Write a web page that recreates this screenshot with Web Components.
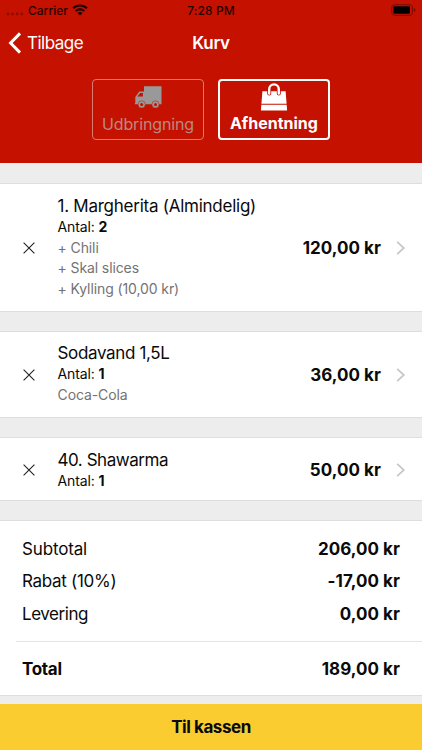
<!DOCTYPE html>
<html lang="da">
<head>
<meta charset="utf-8">
<title>Kurv</title>
<style>
  body {
    margin: 0;
    font-family: Inter, "Liberation Sans", sans-serif;
    color: #0a0a0a;
  }
</style>
</head>
<body>
<cart-screen>
  <status-bar slot="top" carrier="Carrier" time="7:28 PM"></status-bar>
  <nav-bar slot="top" back="Tilbage">Kurv</nav-bar>
  <delivery-switch slot="top">
    <delivery-option icon="truck" style="--track:-0.15px">Udbringning</delivery-option>
    <delivery-option icon="bag" selected style="--track:0">Afhentning</delivery-option>
  </delivery-switch>
  <cart-item name="1. Margherita (Almindelig)" count="2" price="120,00 kr">
    <div>+ Chili</div>
    <div>+ Skal slices</div>
    <div>+ Kylling (10,00 kr)</div>
  </cart-item>
  <cart-item name="Sodavand 1,5L" count="1" price="36,00 kr" style="--track:-0.35px">
    <div>Coca-Cola</div>
  </cart-item>
  <cart-item name="40. Shawarma" count="1" price="50,00 kr" style="--track:-0.45px"></cart-item>
  <cart-totals>
    <total-row label="Subtotal" style="--track:-0.15px">206,00 kr</total-row>
    <total-row label="Rabat (10%)">-17,00 kr</total-row>
    <total-row label="Levering" style="--track:-0.45px">0,00 kr</total-row>
    <total-row slot="sum" label="Total" strong>189,00 kr</total-row>
  </cart-totals>
  <checkout-button slot="bottom">Til kassen</checkout-button>
</cart-screen>

<script>
// @ts-check

/** Base class: attaches an open root filled with the markup of render(). */
class Part extends HTMLElement {
  constructor() {
    super();
    this._root = this.attachShadow({ mode: "open" });
    this._root.innerHTML = this.render();
  }
  render() {
    return "<slot></slot>";
  }
  attr(name) {
    return this.getAttribute(name) || "";
  }
}

class CartScreen extends Part {
  render() {
    return `
      <header><slot name="top"></slot></header>
      <main><slot></slot></main>
      <slot name="bottom"></slot>
      <style>
        :host {
          display: flex;
          flex-direction: column;
          height: 750px;
          overflow: hidden;
          background: #ededed;
        }
        header {
          height: 163px;
          flex: none;
          background: #c51100;
        }
        main {
          flex: 1;
          display: flex;
          flex-direction: column;
          gap: 19px;
          padding-top: 20px;
        }
      </style>`;
  }
}

class StatusBar extends Part {
  render() {
    return `
      <div class="left">
        <svg width="18" height="4" viewBox="0 0 18 4" fill="#8f0c00">
          <circle cx="2" cy="2" r="1.4"/><circle cx="6.6" cy="2" r="1.4"/>
          <circle cx="11.2" cy="2" r="1.4"/><circle cx="15.8" cy="2" r="1.4"/>
        </svg>
        <span class="carrier">${this.attr("carrier")}</span>
        <svg class="wifi" width="16" height="12" viewBox="0 0 16 12" fill="none" stroke="#1c0200" stroke-width="2.1">
          <path d="M1 4.3a10 10 0 0 1 14 0"/>
          <path d="M3.7 7.1a6.2 6.2 0 0 1 8.6 0"/>
          <path d="M8 11.6L5.5 9.1a3.6 3.6 0 0 1 5 0z" fill="#1c0200" stroke="none"/>
        </svg>
      </div>
      <span class="time">${this.attr("time")}</span>
      <div class="right">
        <svg width="26" height="12" viewBox="0 0 26 12">
          <rect x=".8" y=".7" width="20.6" height="10.6" rx="2.6" fill="none" stroke="#7c0a00"/>
          <rect x="2.4" y="2.3" width="16.6" height="7.4" rx="1.2" fill="#000"/>
          <path d="M22.8 4v4c1.4-.5 1.8-1.2 1.8-2s-.4-1.5-1.8-2z" fill="#7c0a00"/>
        </svg>
      </div>
      <style>
        :host {
          display: grid;
          grid-template-columns: 1fr auto 1fr;
          align-items: center;
          height: 20px;
          font-size: 12px;
          font-weight: 500;
          color: #260300;
        }
        .left { display: flex; align-items: center; padding-left: 6px; }
        .left svg:first-child { margin-top: 7px; }
        .carrier { margin: 0 4.5px 0 4px; }
        .time { letter-spacing: 0.1px; }
        .right { display: flex; justify-content: flex-end; padding-right: 5px; }
      </style>`;
  }
}

class NavBar extends Part {
  render() {
    return `
      <div class="back">
        <svg width="14" height="22" viewBox="0 0 14 22" fill="none" stroke="#fff" stroke-width="3">
          <path d="M12 1.4L2.6 11L12 20.6"/>
        </svg>
        <span>${this.attr("back")}</span>
      </div>
      <b><slot></slot></b>
      <style>
        :host {
          display: grid;
          grid-template-columns: 1fr auto 1fr;
          align-items: center;
          height: 45px;
          color: #fff;
          font-size: 17px;
        }
        .back { display: flex; align-items: center; gap: 5px; padding-left: 8px; letter-spacing: -0.5px; }
        b { font-weight: 600; letter-spacing: -0.3px; }
      </style>`;
  }
}

class DeliverySwitch extends Part {
  render() {
    return `
      <slot></slot>
      <style>
        :host {
          display: flex;
          justify-content: center;
          gap: 14px;
          padding-top: 14px;
        }
      </style>`;
  }
}

const optionIcons = {
  truck: `
    <svg width="28" height="24" viewBox="0 0 28 24" fill="#999">
      <path d="M10 .3h17.5V18.3H10zM1.3 17.3V11L5.3 5.6H11V18.3H.8v-1z"/>
      <path fill="#c51100" d="M3.3 10.6L6.2 7H8.9v3.6z"/>
      <g stroke="#c51100" stroke-width=".5">
        <circle cx="7.7" cy="18.4" r="3.6"/>
        <circle cx="21.5" cy="18.4" r="3.6"/>
      </g>
      <g fill="#c51100">
        <circle cx="7.7" cy="18.4" r="1.5"/>
        <circle cx="21.5" cy="18.4" r="1.5"/>
      </g>
    </svg>`,
  bag: `
    <svg width="28" height="28" viewBox="0 0 28 28">
      <path fill="#fff" d="M2.4 8.3h23.2l1 12.4H1.4zM1.3 21.7h25.4l.4 5.9H.9z"/>
      <path fill="none" stroke="#c51100" stroke-width="4" stroke-linecap="round" d="M9.2 10.5V6.500a4.800 4.800 0 0 1 9.600 0V10.500"/>
      <path fill="none" stroke="#fff" stroke-width="2.400" stroke-linecap="round" d="M9.200 10.500V6.200a4.800 4.800 0 0 1 9.600 0V10.500"/>
    </svg>`,
};

class DeliveryOption extends Part {
  render() {
    return `
      ${optionIcons[this.attr("icon")]}
      <span><slot></slot></span>
      <style>
        :host {
          box-sizing: border-box;
          display: flex;
          flex-direction: column;
          align-items: center;
          justify-content: space-between;
          width: 112px;
          height: 61px;
          padding: 6px 0 5px;
          border: 1px solid #dc7a70;
          border-radius: 4px;
          color: #ba8882;
          font-size: 16px;
          line-height: 20px;
          letter-spacing: var(--track);
          white-space: nowrap;
        }
        :host([selected]) {
          padding: 2px 0 5px;
          border: 2px solid #fff;
          color: #fff;
          font-weight: 650;
        }
      </style>`;
  }
}

class CartItem extends Part {
  render() {
    return `
      <svg class="remove" width="12" height="12" viewBox="0 0 12 12" stroke="#222" stroke-width="1.1">
        <path d="M.6 .6L11.4 11.4M11.4 .6L.6 11.4"/>
      </svg>
      <div class="info">
        <div class="name">${this.attr("name")}</div>
        <div class="count">Antal: <b>${this.attr("count")}</b></div>
        <div class="extras"><slot></slot></div>
      </div>
      <div class="price">${this.attr("price")}</div>
      <svg width="10" height="14" viewBox="0 0 10 14" fill="none" stroke="#c7c7cc" stroke-width="1.8">
        <path d="M1.2 .9L7.8 7L1.2 13.1"/>
      </svg>
      <style>
        :host {
          display: flex;
          align-items: center;
          padding: 10.6px 16.5px 9.4px 22.5px;
          border: solid #dedede;
          border-width: 1px 0;
          background: #fff;
        }
        .info { flex: 1; margin-left: 23px; }
        .name { font-size: 17px; line-height: 22px; letter-spacing: var(--track, -0.25px); }
        .count { font-size: 14px; line-height: 20px; letter-spacing: -0.1px; }
        .count b { font-weight: 700; }
        .extras { font-size: 14px; line-height: 20.6px; color: #737373; letter-spacing: -0.1px; }
        ::slotted(:first-child) { margin-top: 1.2px; }
        ::slotted(:last-child) { margin-bottom: 1.6px; }
        .price { margin-right: 14.5px; font-size: 17px; font-weight: 650; letter-spacing: 0.05px; }
      </style>`;
  }
}

class CartTotals extends Part {
  render() {
    return `
      <div class="rows"><slot></slot></div>
      <div class="sum"><slot name="sum"></slot></div>
      <style>
        :host {
          display: block;
          border: solid #dedede;
          border-width: 1px 0;
          background: #fff;
        }
        .rows { padding: 12px 22px 10px; }
        .sum { margin-left: 16px; padding: 11.5px 22px 9.5px 6px; border-top: 1px solid #e4e4e6; }
      </style>`;
  }
}

class TotalRow extends Part {
  render() {
    return `
      <span>${this.attr("label")}</span>
      <b><slot></slot></b>
      <style>
        :host {
          display: flex;
          justify-content: space-between;
          font-size: 17px;
          line-height: 32.6px;
        }
        span { letter-spacing: var(--track, -0.3px); }
        b, :host([strong]) { font-weight: 650; }
        b { letter-spacing: 0.05px; }
      </style>`;
  }
}

class CheckoutButton extends Part {
  render() {
    return `
      <slot></slot>
      <style>
        :host {
          display: flex;
          align-items: center;
          justify-content: center;
          flex: none;
          height: 46px;
          background: #fbcc2f;
          font-size: 17px;
          font-weight: 650;
          letter-spacing: -0.45px;
        }
      </style>`;
  }
}

customElements.define("cart-screen", CartScreen);
customElements.define("status-bar", StatusBar);
customElements.define("nav-bar", NavBar);
customElements.define("delivery-switch", DeliverySwitch);
customElements.define("delivery-option", DeliveryOption);
customElements.define("cart-item", CartItem);
customElements.define("cart-totals", CartTotals);
customElements.define("total-row", TotalRow);
customElements.define("checkout-button", CheckoutButton);
</script>
</body>
</html>
